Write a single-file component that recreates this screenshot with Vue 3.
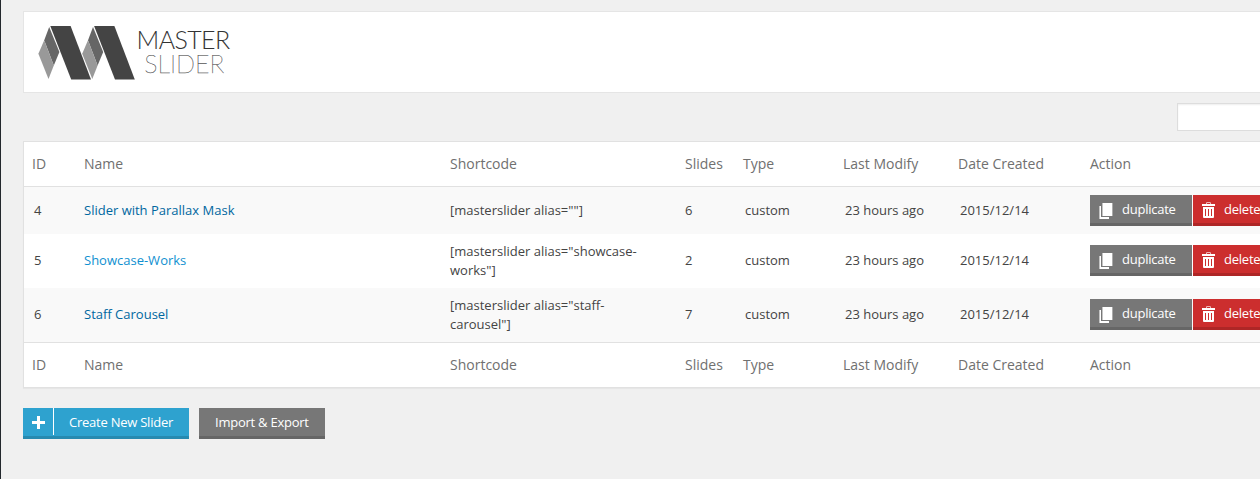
<script setup>
const columns = ['ID', 'Name', 'Shortcode', 'Slides', 'Type', 'Last Modify', 'Date Created', 'Action']
const sliders = [
  { id: 4, name: 'Slider with Parallax Mask', code: ['[masterslider alias=""]'], slides: 6 },
  { id: 5, name: 'Showcase-Works', code: ['[masterslider alias="showcase-', 'works"]'], slides: 2, active: true },
  { id: 6, name: 'Staff Carousel', code: ['[masterslider alias="staff-', 'carousel"]'], slides: 7 },
]
</script>

<template>
  <div class="page">
    <header class="brand">
      <svg class="logo" width="208" height="66" viewBox="31 19 208 66">
        <g v-for="dx in [0, 43.8]" :key="dx" :transform="`translate(${dx} 0)`">
          <path d="M49.2 27L59.4 52L53.8 65.5L44.2 40.3Z" fill="#666" />
          <path d="M44.2 40.3L53.8 65.5L48.5 79L38.4 53.7Z" fill="#999" />
          <path d="M50.3 26H70.6L91 79.4H71.2Z" fill="#444" />
        </g>
        <text class="word-master" x="136.6" y="49" textLength="93.5">MASTER</text>
        <text class="word-slider" x="144.3" y="73" textLength="80">SLIDER</text>
      </svg>
    </header>

    <div class="tools"><input class="search" type="text" aria-label="Search" /></div>

    <main class="table">
      <div class="row head">
        <span v-for="c in columns" :key="c">{{ c }}</span>
      </div>
      <div v-for="(s, i) in sliders" :key="s.id" class="row item" :class="{ first: i === 0 }">
        <span class="inset">{{ s.id }}</span>
        <a :class="{ active: s.active }">{{ s.name }}</a>
        <span class="code"><span v-for="line in s.code" :key="line" class="line">{{ line }}</span></span>
        <span>{{ s.slides }}</span>
        <span class="inset">custom</span>
        <span class="inset">23 hours ago</span>
        <span class="inset">2015/12/14</span>
        <div class="actions">
          <button class="btn duplicate">
            <svg width="14" height="16" viewBox="0 0 14 16">
              <path d="M0 3H1V16H0Z" fill="#c4c4c4" />
              <path d="M1 3H2V14H10V16H1Z" fill="#fff" />
              <path d="M3 0H4V13H3Z" fill="#c4c4c4" />
              <path d="M4 0H13V13H4Z" fill="#fff" />
              <path d="M13 0H14V13H13Z" fill="#aaa" />
            </svg>
            <span>duplicate</span>
          </button>
          <button class="btn delete">
            <svg width="13" height="16" viewBox="0 0 13 16" fill="#fff">
              <path d="M4 2V1.2Q4 0 5.2 0H7.8Q9 0 9 1.2V2H8V1H5V2Z" opacity=".65" />
              <path d="M0 2H13V4H0Z" />
              <path d="M1 5H12V15Q12 16 11 16H2Q1 16 1 15ZM3 7V14H4V7ZM6 7V14H7V7ZM9 7V14H10V7Z" fill-rule="evenodd" />
            </svg>
            <span>delete</span>
          </button>
        </div>
      </div>
      <div class="row head foot">
        <span v-for="c in columns" :key="c">{{ c }}</span>
      </div>
    </main>

    <footer class="bottom">
      <button class="btn create">
        <span class="plus">
          <svg width="13" height="13" viewBox="0 0 13 13"><path d="M5 0H8V5H13V8H8V13H5V8H0V5H5Z" fill="#fff" /></svg>
        </span>
        <span class="label">Create New Slider</span>
      </button>
      <button class="btn import">Import &amp; Export</button>
    </footer>
  </div>
</template>

<style>
body { margin: 0; background: #f0f0f0; overflow: hidden; }
</style>

<style scoped>
.page {
  box-sizing: border-box;
  width: 1260px;
  height: 479px;
  padding: 11px 0 0 22px;
  border-left: 1px solid #23282d;
  background: #f0f0f0;
  overflow: hidden;
  font: 13px/19px "Open Sans", sans-serif;
  color: #444;
}
.brand {
  box-sizing: border-box;
  width: 1400px;
  height: 82px;
  padding: 7px;
  border: 1px solid #e5e5e5;
  background: #fff;
}
.logo { display: block; }
.word-master { font: 300 25px Lato, sans-serif; fill: #333; }
.word-slider { font: 100 25px Lato, sans-serif; fill: #555; stroke: #555; stroke-width: 0.25px; }
.tools {
  display: flex;
  width: 1400px;
  height: 48px;
  padding-left: 1154px;
  padding-top: 10px;
  box-sizing: border-box;
}
.search {
  box-sizing: border-box;
  width: 200px;
  height: 28px;
  border: 1px solid #ddd;
  background: #fff;
  box-shadow: inset 0 1px 2px rgba(0, 0, 0, 0.07);
}
.table {
  box-sizing: border-box;
  width: 1400px;
  height: 247px;
  border: 1px solid #e1e1e1;
  background: #fff;
  box-shadow: 0 1px 1px rgba(0, 0, 0, 0.04);
}
.row {
  display: grid;
  grid-template-columns: 52px 366px 235px 58px 100px 115px 132px 1fr;
  align-items: center;
  box-sizing: border-box;
  height: 54px;
}
.row > * { padding-left: 8px; padding-bottom: 1px; white-space: nowrap; }
.row > .inset { padding-left: 10px; }
.row > .code, .first > * { padding-bottom: 0; }
.head {
  height: 45px;
  border-bottom: 1px solid #e1e1e1;
  font-size: 14px;
  color: #707070;
}
.foot { border-bottom: 0; border-top: 1px solid #e1e1e1; }
.item:nth-child(even) { background: #f9f9f9; }
.first { height: 47px; }
.item a { color: #0067a0; }
.item a.active { color: #1090d0; }
.line { display: block; }
.actions { display: flex; gap: 1px; }
.btn {
  box-sizing: border-box;
  display: flex;
  align-items: center;
  height: 31px;
  margin: 0;
  padding: 0;
  border: 0;
  border-bottom: 3px solid #666;
  background: #777;
  color: #fff;
  font: 13px/19px "Open Sans", sans-serif;
  letter-spacing: -0.24px;
}
.duplicate { width: 102px; padding: 4px 0 0 9px; }
.duplicate span { margin: -4px 0 0 9px; }
.delete { width: 82px; padding: 1px 0 0 9px; background: #cc2e2e; border-color: #ae2626; }
.delete span { margin: -1px 0 0 9px; }
.bottom { display: flex; gap: 10px; padding-top: 20px; }
.create { width: 166px; background: #2ea2cf; border-color: #278ab0; }
.plus {
  display: flex;
  align-items: center;
  box-sizing: border-box;
  width: 31px;
  height: 27px;
  margin-top: -1px;
  padding: 2px 0 0 9px;
  border-right: 1px solid #fff;
}
.label { padding-left: 15px; }
.import { width: 126px; padding-left: 16px; }
</style>
